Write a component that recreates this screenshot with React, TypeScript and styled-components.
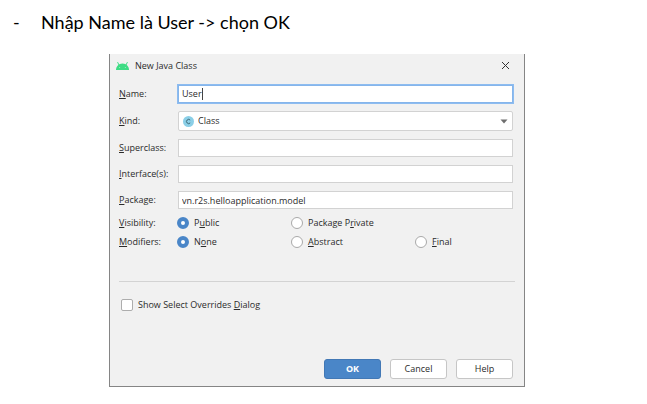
import React, { ReactNode } from 'react';
import styled, { createGlobalStyle, css } from 'styled-components';

const GlobalStyle = createGlobalStyle`
  *, *::before, *::after { box-sizing: border-box; }
  body { margin: 0; background: #fff; }
  button, input, select { font: inherit; color: inherit; }
`;

const Page = styled.main`
  padding: 8px 122px 16px 109px;
  font-family: 'Open Sans', 'Noto Sans', sans-serif;
  color: #2b2b2b;
`;

const Steps = styled.ul`
  list-style: none;
  margin: 0 0 18px -96px;
  padding: 0;
  font-family: Lato, 'Noto Sans', sans-serif;
  font-size: 18px;
  line-height: 28px;
  color: #000;
`;

const Step = styled.li`
  display: flex;
  white-space: nowrap;
  &::before { content: '-'; width: 28px; flex: none; }
`;

const Dialog = styled.form`
  display: flex;
  flex-direction: column;
  border: 1px solid #858585;
  border-top: 0;
  background: #f1f1f1;
  font-size: 9px;
  line-height: 12px;
`;

const TitleBar = styled.header`
  display: flex;
  align-items: center;
  height: 23px;
  padding: 0 14px 0 6px;
  gap: 6px;
`;

const Title = styled.h1`
  flex: 1;
  margin: 0;
  font: inherit;
`;

const CloseButton = styled.button`
  display: flex;
  padding: 0;
  border: 0;
  background: none;
`;

const Fields = styled.div`
  display: grid;
  grid-template-columns: 59px minmax(0, 1fr);
  row-gap: 8px;
  align-items: center;
  padding: 8px 11px 0 9px;
`;

const Label = styled.label`
  white-space: nowrap;
`;

const fieldBox = css`
  width: 100%;
  height: 18px;
  border: 1px solid #d2d2d2;
  background: #fff;
`;

const TextInput = styled.input`
  ${fieldBox}
  padding: 0 3px;
  outline: none;
`;

const FocusedField = styled.div`
  ${fieldBox}
  display: flex;
  align-items: center;
  padding-left: 3px;
  border-color: #85b5eb;
  box-shadow: 0 0 0 1px #8dbcf0;
`;

const NameInput = styled.input`
  field-sizing: content;
  max-width: 100%;
  padding: 0;
  border: 0;
  outline: none;
  background: none;
  caret-color: transparent;
`;

const Caret = styled.span`
  width: 1px;
  height: 12px;
  background: #444;
`;

const SelectBox = styled.div`
  display: grid;
  grid-template-columns: 20px 1fr 18px;
  align-items: center;
  svg { grid-row: 1; pointer-events: none; z-index: 1; }
  svg:first-child { grid-column: 1; justify-self: center; }
  svg:last-child { grid-column: 3; justify-self: center; }
`;

const Select = styled.select`
  ${fieldBox}
  grid-area: 1 / 1 / 2 / 4;
  height: 20px;
  padding: 0 18px 0 19px;
  border-radius: 2px;
  appearance: none;
`;

const Options = styled.div`
  display: grid;
  grid-template-columns: 59px 114px 124px 1fr;
  row-gap: 7px;
  align-items: center;
  padding: 8px 11px 0 9px;
`;

const OptionRow = styled.div`
  display: contents;
`;

const Choice = styled.label`
  display: flex;
  align-items: center;
  gap: 5px;
  white-space: nowrap;
`;

const Radio = styled.input`
  appearance: none;
  flex: none;
  width: 12px;
  height: 12px;
  margin: 0 0 0 -1px;
  border: 1px solid #a9a9a9;
  border-radius: 50%;
  background: #fff;
  &:checked { border: 4px solid #4a86c8; }
`;

const Separator = styled.hr`
  width: auto;
  height: 1px;
  margin: 33px 9px 17px 9px;
  border: 0;
  background: #d3d3d3;
`;

const CheckRow = styled.div`
  padding-left: 11px;
`;

const Checkbox = styled.input`
  appearance: none;
  width: 12px;
  height: 12px;
  margin: 0;
  border: 1px solid #adadad;
  border-radius: 2px;
  background: #fff;
`;

const Actions = styled.footer`
  display: flex;
  justify-content: flex-end;
  gap: 9px;
  padding: 48px 11px 7px;
`;

const Button = styled.button<{ $primary?: boolean }>`
  width: 57px;
  height: 20px;
  padding: 0;
  border: 1px solid ${p => (p.$primary ? '#4278b5' : '#c6c6c6')};
  border-radius: 3px;
  background: ${p => (p.$primary ? '#4a86c8' : '#fff')};
  color: ${p => (p.$primary ? '#fff' : '#2b2b2b')};
  font-weight: ${p => (p.$primary ? 700 : 400)};
`;

const AndroidIcon = () => (
  <svg width="13" height="8" viewBox="0 0 26 16" aria-hidden="true">
    <path d="M0 16C0 9 5 3 13 3s13 6 13 13Z" fill="#3ddc84" />
    <path d="M7 8 3.5 1M19 8l3.5-7" stroke="#3ddc84" strokeWidth="2" strokeLinecap="round" />
    <circle cx="7.5" cy="11" r="0.9" fill="#f1f1f1" />
    <circle cx="18.5" cy="11" r="0.9" fill="#f1f1f1" />
  </svg>
);

const CloseIcon = () => (
  <svg width="9" height="9" viewBox="0 0 9 9" aria-hidden="true">
    <path d="M1 1l7 7M8 1 1 8" stroke="#333" strokeWidth="1" />
  </svg>
);

const ClassIcon = () => (
  <svg width="11" height="11" viewBox="0 0 11 11" aria-hidden="true">
    <circle cx="5.5" cy="5.5" r="5.5" fill="#8bcfe7" />
    <path d="M7.2 4.1A2.1 2.1 0 1 0 7.2 6.9" fill="none" stroke="#3f6876" strokeWidth="1" />
  </svg>
);

const ArrowIcon = () => (
  <svg width="8" height="5" viewBox="0 0 8 5" aria-hidden="true">
    <path d="M0.5 0.5h7L4 4.5Z" fill="#6e6e6e" />
  </svg>
);

type RadioOptionProps = { name: string; checked?: boolean; children: ReactNode };

const RadioOption = ({ name, checked, children }: RadioOptionProps) => (
  <Choice>
    <Radio type="radio" name={name} defaultChecked={checked} />
    <span>{children}</span>
  </Choice>
);

export default function App() {
  return (
    <Page>
      <GlobalStyle />
      <Steps>
        <Step>Nhập Name là User -&gt; chọn OK</Step>
      </Steps>
      <Dialog onSubmit={e => e.preventDefault()}>
        <TitleBar>
          <AndroidIcon />
          <Title>New Java Class</Title>
          <CloseButton type="button" aria-label="Close"><CloseIcon /></CloseButton>
        </TitleBar>
        <Fields>
          <Label htmlFor="name"><u>N</u>ame:</Label>
          <FocusedField>
            <NameInput id="name" defaultValue="User" />
            <Caret />
          </FocusedField>
          <Label htmlFor="kind"><u>K</u>ind:</Label>
          <SelectBox>
            <ClassIcon />
            <Select id="kind"><option>Class</option></Select>
            <ArrowIcon />
          </SelectBox>
          <Label htmlFor="superclass"><u>S</u>uperclass:</Label>
          <TextInput id="superclass" />
          <Label htmlFor="interfaces"><u>I</u>nterface(s):</Label>
          <TextInput id="interfaces" />
          <Label htmlFor="package"><u>P</u>ackage:</Label>
          <TextInput id="package" defaultValue="vn.r2s.helloapplication.model" />
        </Fields>
        <Options>
          <OptionRow role="radiogroup" aria-label="Visibility">
            <span><u>V</u>isibility:</span>
            <RadioOption name="visibility" checked>P<u>u</u>blic</RadioOption>
            <RadioOption name="visibility">Package P<u>r</u>ivate</RadioOption>
            <span />
          </OptionRow>
          <OptionRow role="radiogroup" aria-label="Modifiers">
            <span><u>M</u>odifiers:</span>
            <RadioOption name="modifiers" checked>N<u>o</u>ne</RadioOption>
            <RadioOption name="modifiers"><u>A</u>bstract</RadioOption>
            <RadioOption name="modifiers"><u>F</u>inal</RadioOption>
          </OptionRow>
        </Options>
        <Separator />
        <CheckRow>
          <Choice>
            <Checkbox type="checkbox" />
            <span>Show Select Overrides <u>D</u>ialog</span>
          </Choice>
        </CheckRow>
        <Actions>
          <Button $primary type="submit">OK</Button>
          <Button type="button">Cancel</Button>
          <Button type="button">Help</Button>
        </Actions>
      </Dialog>
    </Page>
  );
}
